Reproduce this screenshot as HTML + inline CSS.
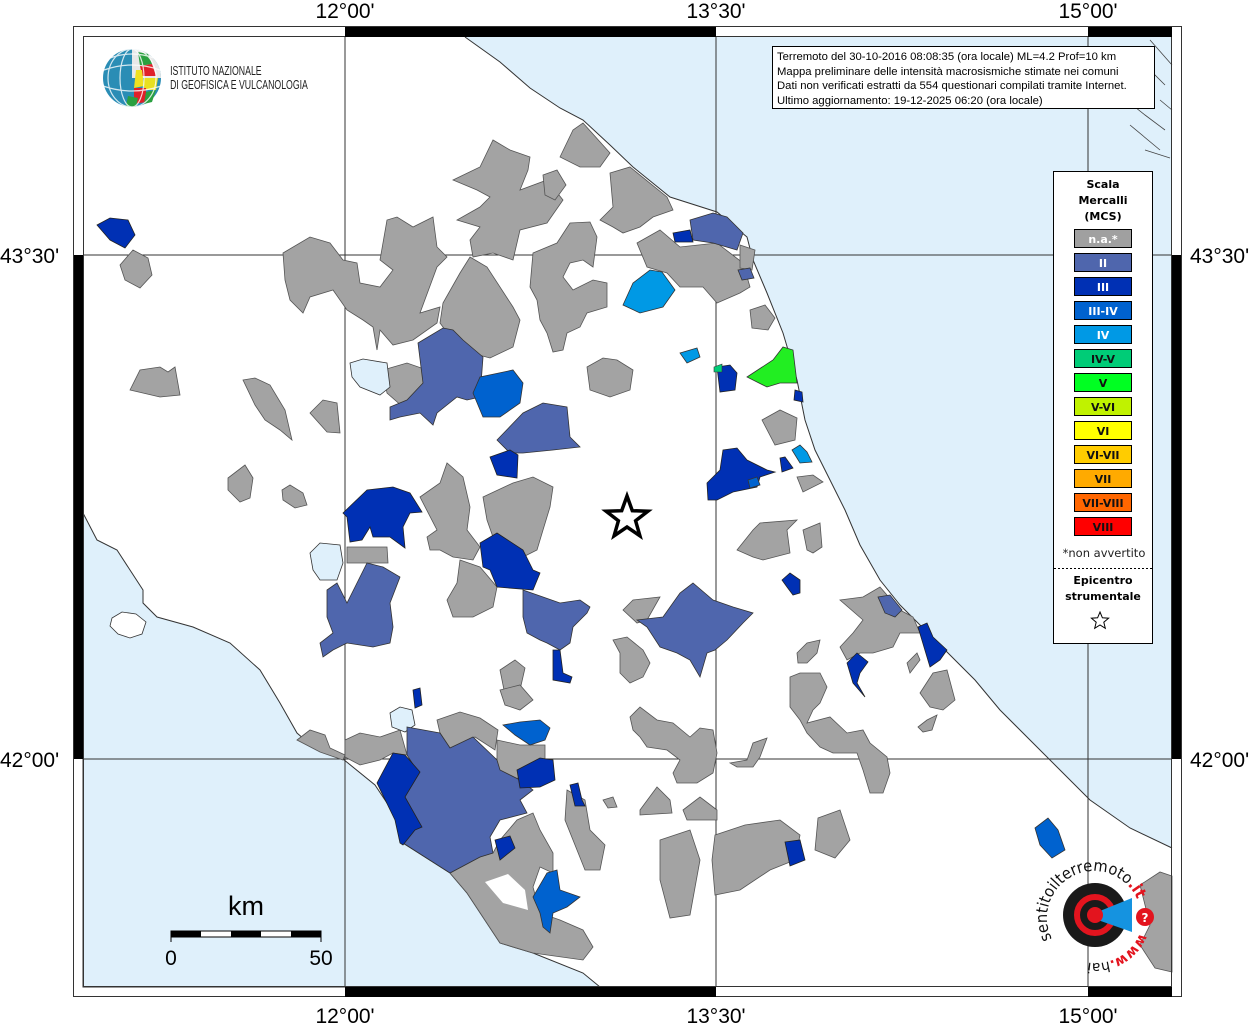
<!DOCTYPE html>
<html><head><meta charset="utf-8"><style>
html,body{margin:0;padding:0;background:#fff}
svg{display:block}
.g{fill:#a3a3a3;stroke:#555;stroke-width:.8}
.b2{fill:#4f66ad;stroke:#333;stroke-width:.8}
.b3{fill:#0030b4;stroke:#222;stroke-width:.8}
.b34{fill:#0062cf;stroke:#333;stroke-width:.8}
.b4{fill:#0099e5;stroke:#333;stroke-width:.8}
.v{fill:#22ee22;stroke:#333;stroke-width:.8}
.lk{fill:#dff0fb;stroke:#333;stroke-width:.8}
.ax{font-family:"Liberation Sans",sans-serif;font-size:21px;fill:#000}
.lg{font-family:"DejaVu Sans","Liberation Sans",sans-serif;font-weight:bold;font-size:11px;text-anchor:middle}
</style></head><body>
<svg width="1255" height="1024" viewBox="0 0 1255 1024" xmlns="http://www.w3.org/2000/svg">
<rect width="1255" height="1024" fill="#fff"/>
<polygon fill="#dff0fb" points="465,37 500,62 530,88 560,108 583,120 610,145 633,167 670,197 717,212 747,237 753,260 767,293 783,333 797,380 805,420 815,450 830,480 845,510 860,545 880,580 900,605 920,625 945,650 975,680 1000,710 1030,740 1060,770 1090,800 1130,828 1172,848 1172,37"/>
<polyline fill="none" stroke="#333" stroke-width="1" points="465,37 500,62 530,88 560,108 583,120 610,145 633,167 670,197 717,212 747,237 753,260 767,293 783,333 797,380 805,420 815,450 830,480 845,510 860,545 880,580 900,605 920,625 945,650 975,680 1000,710 1030,740 1060,770 1090,800 1130,828 1172,848"/>
<polygon fill="#dff0fb" stroke="#333" stroke-width="1" points="83,513 97,540 117,550 130,570 143,590 143,603 157,617 193,627 230,643 260,670 280,703 297,733 313,747 343,759 375,785 395,815 403,843 450,873 467,893 500,943 533,953 583,973 600,987 83,987"/>
<path d="M112,618 l10,-6 14,2 10,8 -4,12 -12,4 -12,-4 -8,-8z" fill="#fff" stroke="#333" stroke-width=".8"/>
<g fill="none" stroke="#444" stroke-width=".8">
<path d="M1115,50 l20,12 15,8 M1120,95 l25,20 20,15 M1140,60 l25,25 M1150,40 l22,25 M1130,125 l30,25 M1160,100 l12,10 M1145,150 l25,8"/>
</g>
<g stroke="#333" stroke-width="1">
<line x1="345" y1="37" x2="345" y2="987"/><line x1="716" y1="37" x2="716" y2="987"/><line x1="1088" y1="37" x2="1088" y2="987"/>
<line x1="83" y1="255" x2="1172" y2="255"/><line x1="83" y1="759" x2="1172" y2="759"/>
</g>
<g class="g">
<polygon points="453,180 480,167 493,140 510,150 530,157 528,170 520,190 547,180 563,200 547,223 520,230 513,260 493,253 473,257 470,240 480,227 457,220 480,207 490,197 477,190"/>
<polygon points="283,253 310,237 330,243 343,260 357,263 360,283 380,287 393,270 380,260 387,220 397,217 413,227 433,217 437,247 447,257 437,267 420,313 440,307 437,323 413,340 393,345 380,330 377,350 373,327 363,320 347,310 333,290 310,297 303,313 290,300 285,280"/>
<polygon points="470,257 487,267 513,307 520,320 513,347 490,358 460,350 440,323 443,303 460,273"/>
<polygon points="533,253 557,243 570,223 590,222 597,237 593,267 583,260 570,263 563,277 573,290 593,280 607,283 607,307 587,313 580,327 567,333 563,350 553,352 547,333 540,320 537,300 530,287"/>
<polygon points="560,157 573,130 583,123 610,153 600,167 580,167"/>
<polygon points="610,173 630,167 667,197 673,210 653,217 640,227 623,233 613,227 600,220 613,207"/>
<polygon points="637,243 660,230 680,247 717,243 743,263 750,287 740,293 717,303 703,287 680,287 667,273 647,267"/>
<polygon points="587,367 603,358 617,360 633,370 630,390 610,397 590,390"/>
<polygon points="383,370 407,363 427,370 423,400 403,407 387,393"/>
<polygon points="310,413 323,400 337,403 340,433 327,432"/>
<polygon points="130,390 140,370 160,367 168,372 175,367 180,395 160,397"/>
<polygon points="243,380 255,378 270,385 285,410 292,440 280,430 265,420 255,405"/>
<polygon points="228,478 245,465 253,478 250,498 240,502 228,490"/>
<polygon points="282,490 290,485 303,493 307,505 295,508 283,500"/>
<polygon points="347,547 387,547 388,563 347,563"/>
<polygon points="420,497 440,483 447,463 463,477 470,507 467,530 480,547 473,560 453,557 440,550 430,550 427,537 437,530"/>
<polygon points="483,497 513,483 533,477 553,487 550,507 543,530 537,550 523,557 510,543 493,537 487,520"/>
<polygon points="460,560 480,567 497,587 493,607 473,617 453,617 447,600 457,583"/>
<polygon points="797,477 813,475 823,482 803,492"/>
<polygon points="737,550 753,530 760,523 797,520 787,530 790,553 763,560 753,557"/>
<polygon points="803,530 820,523 822,547 813,553 807,550"/>
<polygon points="623,610 633,600 660,597 647,620 637,623"/>
<polygon points="613,640 627,637 643,650 650,663 643,677 630,683 620,673 620,653"/>
<polygon points="840,600 863,597 880,587 900,610 913,617 920,633 900,633 893,647 873,653 860,653 847,660 840,647 853,633 863,620"/>
<polygon points="790,677 800,673 820,673 827,687 820,703 813,710 807,723 830,717 847,733 863,730 870,743 887,757 890,773 883,793 870,793 863,770 857,753 833,753 820,747 807,733 800,720 790,707"/>
<polygon points="920,693 933,673 947,670 955,700 943,710 930,707"/>
<polygon points="797,653 807,643 820,640 817,653 807,663 798,663"/>
<polygon points="918,727 927,720 937,715 932,730 923,732"/>
<polygon points="907,663 917,653 920,660 910,673"/>
<polygon points="630,717 640,707 657,720 673,723 690,737 700,728 713,730 717,753 713,773 697,783 677,783 673,773 680,760 667,750 647,747 640,737 633,730"/>
<polygon points="730,763 747,760 753,743 767,738 760,757 753,767 737,767"/>
<polygon points="640,810 657,787 670,800 672,813 640,815"/>
<polygon points="603,800 613,797 617,807 608,808"/>
<polygon points="683,810 700,797 717,810 717,820 687,820"/>
<polygon points="660,840 690,830 700,860 690,915 670,918 660,880"/>
<polygon points="715,835 745,825 780,820 800,835 795,860 770,870 740,890 715,895 712,860"/>
<polygon points="818,818 840,810 850,840 835,858 815,850"/>
<polygon points="1140,885 1160,872 1172,876 1172,972 1155,968 1140,945 1150,925"/>
<polygon points="120,265 133,250 148,258 152,275 140,288 125,280"/>
<polygon points="750,310 765,305 775,318 768,330 752,328"/>
<polygon points="762,420 780,410 797,418 795,440 775,445"/>
<polygon points="500,670 515,660 525,668 520,690 505,695"/>
<polygon points="500,690 520,685 533,700 520,710 505,705"/>
<polygon points="297,740 310,730 325,735 330,748 345,755 343,760 320,752"/>
<polygon points="345,740 360,733 380,737 400,730 407,755 393,753 380,760 360,765 345,757"/>
<polygon points="437,720 460,712 480,718 498,730 495,750 475,737 450,748 440,733"/>
<polygon points="497,740 520,745 545,745 545,760 530,775 510,780 497,768"/>
<polygon points="450,873 480,857 493,853 500,840 517,820 533,813 540,830 553,853 553,873 540,867 533,887 540,913 560,920 583,930 593,947 583,960 533,953 500,943 467,893"/>
<polygon points="543,175 557,170 566,185 555,200 545,195"/>
<polygon points="567,790 585,800 590,830 605,845 600,870 585,870 575,845 565,820"/>
<polygon points="740,245 755,250 752,270 740,268"/>
</g>
<polygon points="485,882 508,874 525,890 528,910 503,903" fill="#fff"/>
<g class="lk">
<polygon points="350,363 363,359 387,363 390,387 380,395 360,387 352,377"/>
<polygon points="310,553 320,543 340,545 343,563 337,580 320,580 313,570"/>
<polygon points="390,713 400,707 412,710 415,725 405,732 392,727"/>
</g>
<g class="b2">
<polygon points="418,343 443,328 453,330 463,340 483,357 480,397 467,400 457,397 437,413 433,425 420,413 400,417 390,420 390,407 407,400 423,383"/>
<polygon points="497,440 523,413 543,403 567,407 570,437 580,447 553,450 523,453 510,453"/>
<polygon points="690,220 713,213 727,217 743,233 737,250 713,243 693,240"/>
<polygon points="327,590 337,583 347,603 357,583 367,563 383,567 400,577 390,603 393,627 390,643 373,647 347,643 333,650 323,657 320,643 333,633 327,617"/>
<polygon points="523,590 543,597 560,603 580,600 590,607 587,613 573,627 570,643 560,650 547,643 540,640 527,633 523,617"/>
<polygon points="637,620 663,617 680,593 693,583 713,600 733,607 753,613 743,623 727,640 715,650 707,653 700,677 690,660 677,653 660,647 647,627"/>
<polygon points="878,597 890,595 902,610 895,617 885,613"/>
<polygon points="407,727 440,733 450,748 473,737 497,760 500,770 520,780 533,790 520,800 527,813 500,820 490,837 493,853 480,857 450,873 403,843 417,827 403,797 418,772 407,755"/>
<polygon points="738,270 750,268 754,278 742,280"/>
</g>
<g class="b3">
<polygon points="97,225 110,218 128,220 135,235 125,248 110,240"/>
<polygon points="343,513 367,490 393,487 410,493 422,512 410,513 403,527 405,548 390,537 373,537 370,527 362,540 350,542 347,517"/>
<polygon points="480,543 497,533 523,550 533,570 540,573 533,590 497,587 490,570 483,567"/>
<polygon points="490,457 510,450 518,455 517,478 497,475"/>
<polygon points="707,483 720,470 723,450 737,448 747,460 767,470 775,472 760,477 757,487 733,492 717,500 708,500"/>
<polygon points="780,458 785,457 793,468 782,472"/>
<polygon points="717,367 730,365 737,373 735,390 720,392"/>
<polygon points="673,233 690,230 693,242 675,242"/>
<polygon points="782,580 790,573 800,580 800,593 793,595 787,587"/>
<polygon points="918,627 927,623 933,637 947,650 940,660 930,667 927,657"/>
<polygon points="847,663 857,653 868,662 860,673 857,683 865,697 853,683"/>
<polygon points="553,650 560,650 563,673 572,677 570,683 553,680"/>
<polygon points="393,753 405,755 420,772 405,797 422,827 415,830 403,845 400,843 395,820 377,783"/>
<polygon points="517,770 540,758 553,760 555,780 540,787 520,788"/>
<polygon points="413,690 420,688 422,705 415,708"/>
<polygon points="785,842 800,840 805,860 790,866"/>
<polygon points="570,785 578,783 582,800 585,806 575,806"/>
<polygon points="495,840 510,836 515,848 500,860"/>
<polygon points="795,390 802,392 803,402 794,400"/>
</g>
<g class="b34">
<polygon points="473,393 480,377 513,370 523,383 520,403 500,417 483,417"/>
<polygon points="533,897 547,873 557,870 560,890 580,897 567,907 553,913 550,933 543,927 540,913"/>
<polygon points="503,725 520,722 540,720 550,728 545,740 530,745 515,735"/>
<polygon points="1035,828 1048,818 1058,830 1065,850 1052,858 1040,845"/>
<polygon points="748,480 757,477 760,485 750,488"/>
</g>
<g class="b4">
<polygon points="623,305 633,283 650,270 662,272 675,290 663,307 640,313"/>
<polygon points="680,353 697,348 700,357 687,363"/>
<polygon points="792,450 800,445 807,452 812,462 800,463"/>
</g>
<polygon class="v" points="747,377 773,360 783,347 793,350 797,383 780,383 767,387"/>
<polygon points="714,367 722,364 722,372 714,372" fill="#00cc77" stroke="#333" stroke-width=".6"/>
<polygon points="627,496 632.3,510.7 647.9,511.2 635.6,520.8 639.9,535.8 627,527 614.1,535.8 618.4,520.8 606.1,511.2 621.7,510.7" fill="#fff" stroke="#000" stroke-width="3.5" stroke-linejoin="miter"/>
<rect x="73.5" y="26.5" width="1108" height="970" fill="none" stroke="#333" stroke-width="1"/>
<rect x="83.5" y="36.5" width="1088" height="950" fill="none" stroke="#333" stroke-width="1"/>
<g fill="#000">
<rect x="345" y="27" width="371" height="10"/><rect x="1088" y="27" width="84" height="10"/>
<rect x="345" y="987" width="371" height="10"/><rect x="1088" y="987" width="84" height="10"/>
<rect x="74" y="255" width="9" height="504"/><rect x="1172" y="255" width="9" height="504"/>
</g>
<g class="ax">
<text x="345" y="18" text-anchor="middle">12°00'</text>
<text x="716" y="18" text-anchor="middle">13°30'</text>
<text x="1088" y="18" text-anchor="middle">15°00'</text>
<text x="345" y="1023" text-anchor="middle">12°00'</text>
<text x="716" y="1023" text-anchor="middle">13°30'</text>
<text x="1088" y="1023" text-anchor="middle">15°00'</text>
<text x="0" y="263">43°30'</text>
<text x="0" y="767">42°00'</text>
<text x="1190" y="263">43°30'</text>
<text x="1190" y="767">42°00'</text>
</g>
<rect x="772.5" y="46.5" width="382" height="62" fill="#fff" stroke="#000" stroke-width="1"/>
<g font-family="Liberation Sans,sans-serif" font-size="11.3" fill="#000">
<text x="777" y="60">Terremoto del 30-10-2016 08:08:35 (ora locale) ML=4.2 Prof=10 km</text>
<text x="777" y="75">Mappa preliminare delle intensità macrosismiche stimate nei comuni</text>
<text x="777" y="89">Dati non verificati estratti da 554 questionari compilati tramite Internet.</text>
<text x="777" y="104">Ultimo aggiornamento: 19-12-2025 06:20 (ora locale)</text>
</g>
<g>
<circle cx="132" cy="78" r="29" fill="#2a8db5"/>
<path d="M132,49 A29,29 0 0 1 161,78 L132,78Z" fill="#e8e8e8"/>
<path d="M138,52 l10,2 4,10 -12,2z" fill="#2aa040"/>
<path d="M140,66 l12,-2 4,12 -14,0z" fill="#e0202a"/>
<path d="M136,70 l6,0 2,16 -10,2z" fill="#f0e020"/>
<path d="M144,78 l14,0 -2,12 -12,0z" fill="#e8e020"/>
<path d="M134,88 l12,0 0,14 -12,2z" fill="#e0202a"/>
<path d="M146,92 l10,-2 -4,12 -8,2z" fill="#2aa040"/>
<path d="M128,96 l10,2 -2,9 -10,-1z" fill="#2aa040"/>
<g fill="none" stroke="#fff" stroke-width="1.2" opacity=".8">
<ellipse cx="132" cy="78" rx="12" ry="29"/><ellipse cx="132" cy="78" rx="24" ry="29"/>
<path d="M104,70 Q132,60 160,70 M103,86 Q132,96 161,86 M110,58 Q132,50 154,58"/>
</g>
</g>
<g font-family="Liberation Sans,sans-serif" font-size="12.5" fill="#222" transform="scale(0.7,1)">
<text x="243" y="75">ISTITUTO NAZIONALE</text>
<text x="243" y="89">DI GEOFISICA E VULCANOLOGIA</text>
</g>
<rect x="1053.5" y="171.5" width="99" height="472" fill="#fff" stroke="#000" stroke-width="1"/>
<g class="lg" font-size="11.5" fill="#000">
<text x="1103" y="188">Scala</text><text x="1103" y="204">Mercalli</text><text x="1103" y="220">(MCS)</text>
</g>
<g stroke="#000" stroke-width="1">
<rect x="1074.5" y="229.5" width="57" height="18" fill="#a0a0a0"/>
<rect x="1074.5" y="253.5" width="57" height="18" fill="#4f66ad"/>
<rect x="1074.5" y="277.5" width="57" height="18" fill="#0030b4"/>
<rect x="1074.5" y="301.5" width="57" height="18" fill="#0062cf"/>
<rect x="1074.5" y="325.5" width="57" height="18" fill="#0099e5"/>
<rect x="1074.5" y="349.5" width="57" height="18" fill="#00cc77"/>
<rect x="1074.5" y="373.5" width="57" height="18" fill="#00ff22"/>
<rect x="1074.5" y="397.5" width="57" height="18" fill="#c0f200"/>
<rect x="1074.5" y="421.5" width="57" height="18" fill="#ffff00"/>
<rect x="1074.5" y="445.5" width="57" height="18" fill="#ffcc00"/>
<rect x="1074.5" y="469.5" width="57" height="18" fill="#ffaa00"/>
<rect x="1074.5" y="493.5" width="57" height="18" fill="#ff6600"/>
<rect x="1074.5" y="517.5" width="57" height="18" fill="#ff0000"/>
</g>
<g class="lg">
<text x="1103" y="243" fill="#fff">n.a.*</text>
<text x="1103" y="267" fill="#fff">II</text>
<text x="1103" y="291" fill="#fff">III</text>
<text x="1103" y="315" fill="#fff">III-IV</text>
<text x="1103" y="339" fill="#fff">IV</text>
<text x="1103" y="363" fill="#111">IV-V</text>
<text x="1103" y="387" fill="#111">V</text>
<text x="1103" y="411" fill="#111">V-VI</text>
<text x="1103" y="435" fill="#111">VI</text>
<text x="1103" y="459" fill="#111">VI-VII</text>
<text x="1103" y="483" fill="#111">VII</text>
<text x="1103" y="507" fill="#111">VII-VIII</text>
<text x="1103" y="531" fill="#111">VIII</text>
</g>
<text x="1104" y="557" font-family="DejaVu Sans,sans-serif" font-size="11.5" text-anchor="middle" fill="#222">*non avvertito</text>
<line x1="1054" y1="568.5" x2="1152" y2="568.5" stroke="#000" stroke-dasharray="2,2"/>
<g class="lg" font-size="11.5" fill="#000"><text x="1103" y="584">Epicentro</text><text x="1103" y="600">strumentale</text></g>
<polygon points="1100,612 1102.4,617.8 1108.6,618.2 1103.8,622.2 1105.3,628.3 1100,625 1094.7,628.3 1096.2,622.2 1091.4,618.2 1097.6,617.8" fill="#fff" stroke="#000" stroke-width="1"/>
<text x="246" y="915" font-family="Liberation Sans,sans-serif" font-size="27" text-anchor="middle">km</text>
<rect x="171" y="931" width="150" height="6" fill="#fff" stroke="#000" stroke-width="1"/>
<g fill="#000"><rect x="171" y="931" width="30" height="6"/><rect x="231" y="931" width="30" height="6"/><rect x="291" y="931" width="30" height="6"/></g>
<line x1="171" y1="931" x2="171" y2="942" stroke="#000"/><line x1="321" y1="931" x2="321" y2="942" stroke="#000"/>
<text x="171" y="965" font-family="Liberation Sans,sans-serif" font-size="21" text-anchor="middle">0</text>
<text x="321" y="965" font-family="Liberation Sans,sans-serif" font-size="21" text-anchor="middle">50</text>
<g>
<circle cx="1095" cy="915" r="32" fill="#1a1a1a"/>
<circle cx="1095" cy="915" r="18" fill="none" stroke="#e3141e" stroke-width="6"/>
<polygon points="1095,913 1132,898 1132,932 1095,919" fill="#1593e0"/>
<circle cx="1095" cy="915" r="8" fill="#e3141e"/>
<circle cx="1145" cy="917" r="9" fill="#e3141e"/>
<text x="1145" y="922" font-family="DejaVu Sans,sans-serif" font-size="12" font-weight="bold" fill="#fff" text-anchor="middle">?</text>
<defs>
<path id="arcTop" d="M1052,939 A44,44 0 1 1 1136,897"/>
<path id="arcBot" d="M1140,933 A48,48 0 0 1 1085,962"/>
</defs>
<text font-family="DejaVu Sans,sans-serif" font-size="16" fill="#111"><textPath href="#arcTop" textLength="150" lengthAdjust="spacingAndGlyphs">sentitoilterremoto<tspan fill="#e3141e" font-weight="bold">.it</tspan></textPath></text>
<text font-family="DejaVu Sans,sans-serif" font-size="14" font-weight="bold" fill="#e3141e"><textPath href="#arcBot">www.<tspan fill="#111" font-weight="normal">hai</tspan></textPath></text>
</g>
</svg>
</body></html>
